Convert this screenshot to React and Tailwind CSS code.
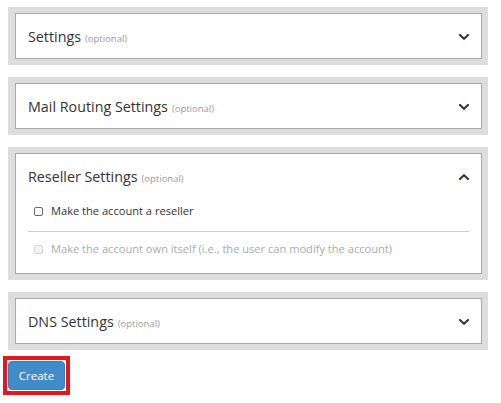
import React from 'react'

const font = { fontFamily: '"Open Sans", "Noto Sans", sans-serif' }

function Chevron({ up }) {
  return (
    <svg width="10" height="6" viewBox="0 0 10 6" className="block">
      <polyline
        points={up ? '1,5 5,1.2 9,5' : '1,1 5,4.8 9,1'}
        fill="none"
        stroke="#2b3445"
        strokeWidth="2"
        strokeLinecap="square"
      />
    </svg>
  )
}

function Box({ disabled }) {
  return (
    <span
      className={
        'inline-block w-[9px] h-[9px] rounded-[2px] border shrink-0 ' +
        (disabled ? 'border-[#d4d4d4] bg-[#f3f3f3]' : 'border-[#6b6b6b] bg-white')
      }
    />
  )
}

function Section({ title, open, children }) {
  return (
    <div className="bg-[#dddddd] pl-[7px] pr-[6px] py-[6px] mb-[12px]">
      <div className="bg-white border border-[#a9a9a9]">
        <div className="h-[44px] flex items-center justify-between pl-[12px] pr-[12px] pt-[1px]">
          <div className="flex items-baseline">
            <span className="text-[14.3px] text-[#333333]">{title}</span>
            <span className="text-[9.5px] text-[#9a9a9a] ml-[4px]">(optional)</span>
          </div>
          <Chevron up={open} />
        </div>
        {children}
      </div>
    </div>
  )
}

export default function App() {
  return (
    <div className="bg-white min-h-screen pt-[7px] pl-[8px] w-[488px]" style={font}>
      <Section title="Settings" />
      <Section title="Mail Routing Settings" />
      <Section title="Reseller Settings" open>
        <div className="px-[12px] pb-[7px]">
          <label className="h-[26px] flex items-center pl-[6px] gap-[8px] text-[11.1px] text-[#333333]">
            <Box />
            Make the account a reseller
          </label>
          <div className="mt-[7px] border-t border-[#cccccc]" />
          <label className="h-[34px] flex items-center pl-[6px] gap-[8px] text-[11.1px] text-[#aaaaaa]">
            <Box disabled />
            Make the account own itself (i.e., the user can modify the account)
          </label>
        </div>
      </Section>
      <Section title="DNS Settings" />
      <div className="-mt-[6px] ml-[-5px] inline-block border-[4px] border-[#e5161d] p-[1px]">
        <button className="w-[57px] h-[29px] bg-[#428bca] border border-[#3a7fbd] rounded-[4px] text-white text-[11.5px] leading-none">
          Create
        </button>
      </div>
    </div>
  )
}
